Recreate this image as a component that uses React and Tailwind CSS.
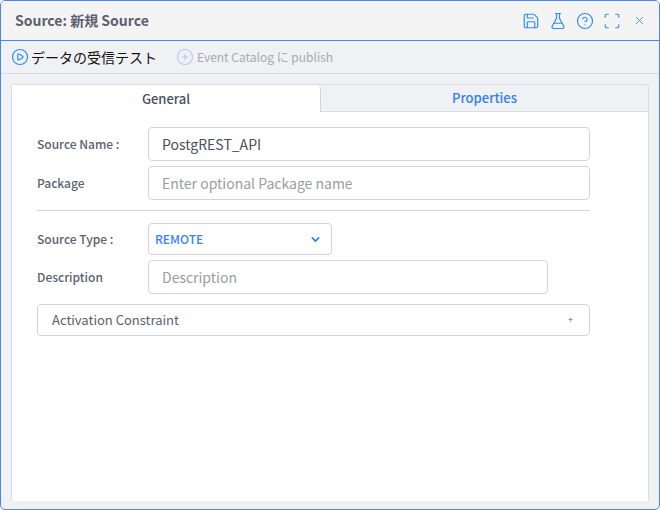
import { Save, FlaskConical, CircleHelp, Scan, X, CirclePlay, CirclePlus, ChevronDown } from 'lucide-react';

const font = "font-['Noto_Sans_CJK_JP','Noto_Sans',sans-serif]";

function Field({ label, value, placeholder, width = 'w-[442px]', className = '' }) {
  return (
    <div className={`flex items-center ${className}`}>
      <div className="w-[111px] text-[12px] font-medium text-[#5a5f73]">{label}</div>
      <div className={`h-[34px] ${width} flex items-center pl-[13px] bg-white border border-[#d3d3dc] rounded-[4px] text-[14px] ${value ? 'text-[#4a4f5e]' : 'text-[#9a9ca5]'}`}>
        {value || placeholder}
      </div>
    </div>
  );
}

export default function App() {
  return (
    <div className={`${font} w-[660px] h-[510px] flex flex-col bg-[#f0f1f5] border border-[#4a86e8] rounded-[5px] overflow-hidden`}>
      <div className="h-[40px] shrink-0 flex items-center justify-between pl-[14px] pr-[12px] bg-[#f4f4f5] border-b border-[#4a86e8]">
        <div className="text-[14px] font-bold text-[#5c6070]">Source: 新規 Source</div>
        <div className="flex items-center gap-[9px] text-[#2f8cf5]">
          <Save size={18} strokeWidth={1.6} />
          <FlaskConical size={18} strokeWidth={1.6} />
          <CircleHelp size={18} strokeWidth={1.6} />
          <Scan size={18} strokeWidth={1.6} />
          <X size={13} strokeWidth={1.6} className="ml-[3px] mr-[1px]" />
        </div>
      </div>

      <div className="h-[33px] shrink-0 flex items-center pl-[10px] border-b border-[#d8dadf]">
        <CirclePlay size={18} strokeWidth={1.6} className="text-[#2f8cf5]" />
        <span className="ml-[2px] text-[14px] text-[#111]">データの受信テスト</span>
        <CirclePlus size={18} strokeWidth={1.4} className="ml-[19px] text-[#a9cdf5]" />
        <span className="ml-[3px] text-[12px] text-[#a8a9b0]">Event Catalog に publish</span>
      </div>

      <div className="flex-1 flex flex-col mt-[10px] mx-[10px] mb-[8px] border-t border-x border-[#dcdde1] rounded-t-[4px] min-h-0">
        <div className="h-[27px] shrink-0 flex">
          <div className="w-[309px] flex items-center justify-center bg-white border-r border-[#d3d3dc] rounded-tr-[4px] text-[13px] font-medium text-[#4a4f5e]">General</div>
          <div className="flex-1 flex items-center justify-center border-b border-[#dcdde1] text-[13px] font-medium text-[#2f80ed]">Properties</div>
        </div>
        <div className="flex-1 bg-white pl-[25px] pt-[15px]">
          <Field label="Source Name :" value="PostgREST_API" />
          <Field label="Package" placeholder="Enter optional Package name" className="mt-[5px]" />
          <div className="w-[553px] h-px mt-[10px] bg-[#d3d3dc]" />
          <div className="flex items-center mt-[12px]">
            <div className="w-[111px] text-[12px] font-medium text-[#5a5f73]">Source Type :</div>
            <div className="w-[184px] h-[32px] flex items-center justify-between pl-[6px] pr-[9px] bg-white border border-[#d3d3dc] rounded-[4px]">
              <span className="text-[12px] font-medium text-[#3b82f6]">REMOTE</span>
              <ChevronDown size={13} strokeWidth={3} className="text-[#2f80ed]" />
            </div>
          </div>
          <Field label="Description" placeholder="Description" width="w-[400px]" className="mt-[5px]" />
          <div className="w-[553px] h-[32px] mt-[10px] flex items-center justify-between pl-[14px] pr-[16px] bg-white border border-[#d3d3dc] rounded-[4px] text-[13px] text-[#5a5f73]">
            <span>Activation Constraint</span>
            <span className="text-[9px] text-[#7a5560]">+</span>
          </div>
        </div>
      </div>
    </div>
  );
}
